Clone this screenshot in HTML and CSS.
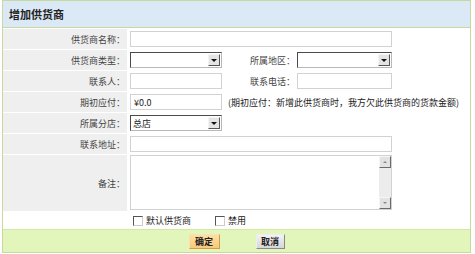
FILE: index.html
```html
<!DOCTYPE html>
<html lang="zh-CN">
<head>
    <meta charset="UTF-8">
    <title>增加供货商</title>
    <link rel="stylesheet" href="styles.css">
</head>
<body>

<div class="panel">
    <div class="panel-head">增加供货商</div>
    <div class="panel-body">
        <div class="row">
            <div class="label">供货商名称：</div>
            <div class="field"><input class="txt txt-long" type="text"></div>
        </div>
        <div class="row">
            <div class="label">供货商类型：</div>
            <div class="field">
                <span class="sel"><select></select></span>
                <span class="sub-label">所属地区：</span>
                <span class="sel sel-wide"><select></select></span>
            </div>
        </div>
        <div class="row">
            <div class="label">联系人：</div>
            <div class="field">
                <input class="txt" type="text">
                <span class="sub-label">联系电话：</span>
                <input class="txt txt-wide" type="text">
            </div>
        </div>
        <div class="row">
            <div class="label">期初应付：</div>
            <div class="field">
                <input class="txt" type="text" value="¥0.0">
                <span class="note">(期初应付：新增此供货商时，我方欠此供货商的货款金额)</span>
            </div>
        </div>
        <div class="row">
            <div class="label">所属分店：</div>
            <div class="field">
                <span class="sel"><select><option>总店</option></select></span>
            </div>
        </div>
        <div class="row">
            <div class="label">联系地址：</div>
            <div class="field"><input class="txt txt-long" type="text"></div>
        </div>
        <div class="row row-tall">
            <div class="label">备注：</div>
            <div class="field">
                <span class="memo">
                    <textarea></textarea>
                    <span class="scroll">
                        <span class="scroll-btn up"></span>
                        <span class="scroll-btn down"></span>
                    </span>
                </span>
            </div>
        </div>
        <div class="row-check">
            <label class="chk"><span class="box"></span>默认供货商</label>
            <label class="chk"><span class="box"></span>禁用</label>
        </div>
    </div>
    <div class="panel-foot">
        <button class="btn btn-ok">确定</button>
        <button class="btn">取消</button>
    </div>
</div>

</body>
</html>
```

FILE: styles.css
```css
body {
    margin: 0;
    font-family: "Noto Sans CJK SC", sans-serif;
    font-size: 9px;
    color: #333;
    background: #fff;
}

.panel {
    width: 467px;
    margin-left: 2px;
    border: 1px solid #c6da9e;
}

.panel-head {
    height: 26px;
    line-height: 26px;
    padding-left: 6px;
    background: #dbe8f5;
    border-bottom: 1px solid #c6da9e;
    font-size: 11px;
    font-weight: bold;
    color: #222;
}

.panel-body {
    display: flex;
    flex-direction: column;
    gap: 1px;
    padding-top: 1px;
}

.row {
    display: grid;
    grid-template-columns: 124px 1fr;
    column-gap: 1px;
    height: 20px;
}

.row-tall {
    height: 56px;
}

.label {
    display: flex;
    align-items: center;
    justify-content: flex-end;
    padding-right: 2px;
    background: #efefef;
    color: #444;
}

.field {
    display: flex;
    align-items: center;
    padding-left: 2px;
}

.row-tall .field {
    align-items: flex-start;
}

.sub-label {
    width: 73px;
    padding-right: 2px;
    text-align: right;
    color: #444;
}

.txt {
    width: 92px;
    height: 16px;
    box-sizing: border-box;
    margin: 0;
    padding: 0 3px;
    border: 1px solid #d2d2d2;
    font: 9px "Noto Sans CJK SC", sans-serif;
    color: #222;
}

.txt-long {
    width: 262px;
}

.txt-wide {
    width: 95px;
}

.note {
    margin-left: 6px;
    color: #222;
}

.sel {
    position: relative;
    display: inline-block;
    width: 92px;
    height: 16px;
}

.sel-wide {
    width: 95px;
}

.sel select {
    width: 100%;
    height: 100%;
    box-sizing: border-box;
    margin: 0;
    padding: 0 2px;
    appearance: none;
    border: 1px solid;
    border-color: #4a4a4a #b8b8b8 #b8b8b8 #4a4a4a;
    border-radius: 0;
    background: #fff;
    font: 9px "Noto Sans CJK SC", sans-serif;
    color: #222;
}

/* 下拉按钮 */
.sel::before {
    content: "";
    position: absolute;
    top: 2px;
    right: 2px;
    width: 10px;
    height: 10px;
    background: #e4e4e4;
    border: 1px solid;
    border-color: #f4f4f4 #555 #555 #f4f4f4;
}

.sel::after {
    content: "";
    position: absolute;
    top: 7px;
    right: 5px;
    border-left: 3px solid transparent;
    border-right: 3px solid transparent;
    border-top: 3px solid #111;
}

.memo {
    position: relative;
    display: inline-block;
    width: 262px;
    height: 55px;
}

.memo textarea {
    width: 100%;
    height: 100%;
    box-sizing: border-box;
    margin: 0;
    border: 1px solid #d2d2d2;
    resize: none;
}

.scroll {
    position: absolute;
    top: 1px;
    right: 1px;
    bottom: 1px;
    width: 12px;
    display: flex;
    flex-direction: column;
    justify-content: space-between;
    background: #ececec;
}

.scroll-btn {
    position: relative;
    height: 12px;
    box-sizing: border-box;
    background: #e2e2e2;
    border: 1px solid;
    border-color: #f6f6f6 #6a6a6a #6a6a6a #f6f6f6;
}

.scroll-btn::after {
    content: "";
    position: absolute;
    left: 3px;
    top: 4px;
    border-left: 2px solid transparent;
    border-right: 2px solid transparent;
}

.scroll-btn.up::after {
    border-bottom: 2px solid #888;
}

.scroll-btn.down::after {
    border-top: 2px solid #888;
}

.row-check {
    display: flex;
    align-items: center;
    height: 17px;
    padding-left: 130px;
    gap: 24px;
}

.chk {
    display: flex;
    align-items: center;
    color: #222;
}

.chk .box {
    width: 10px;
    height: 10px;
    box-sizing: border-box;
    margin-right: 3px;
    border: 1px solid;
    border-color: #555 #ccc #ccc #555;
    background: #fff;
}

.panel-foot {
    display: flex;
    justify-content: center;
    align-items: center;
    gap: 36px;
    height: 22px;
    background: #e2f5bb;
    border-top: 1px solid #d3e8a6;
}

.btn {
    width: 29px;
    height: 15px;
    padding: 0;
    border: 1px solid;
    border-color: #eee #888 #888 #eee;
    background: linear-gradient(#f2f2f2, #d6d6d6);
    font: bold 9px "Noto Sans CJK SC", sans-serif;
    color: #222;
}

.btn-ok {
    width: 31px;
    border-color: #f8e2b0 #d69a48 #d69a48 #f8e2b0;
    background: linear-gradient(#fde0a6, #f8c979);
}
```
